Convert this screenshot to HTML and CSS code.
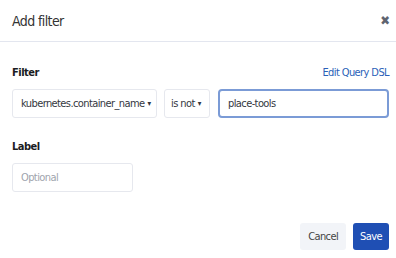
FILE: index.html
```html
<!DOCTYPE html>
<html lang="en">
<head>
    <meta charset="UTF-8">
    <meta name="viewport" content="width=device-width, initial-scale=1.0">
    <title>Add filter</title>
    <link rel="stylesheet" href="styles.css">
</head>
<body>
    <div class="modal">
        <div class="modal-header">
            <span class="modal-title">Add filter</span>
            <span class="close">&#x2716;</span>
        </div>
        <div class="modal-body">
            <div class="label-row">
                <span class="field-label">Filter</span>
                <a class="dsl-link" href="#">Edit Query DSL</a>
            </div>
            <div class="filter-row">
                <div class="select field-select">kubernetes.container_name<span class="caret">&#9662;</span></div>
                <div class="select op-select">is not<span class="caret">&#9662;</span></div>
                <div class="input value-input">place-tools</div>
            </div>
            <div class="label-row label-gap">
                <span class="field-label">Label</span>
            </div>
            <div class="input label-input placeholder">Optional</div>
        </div>
        <div class="modal-footer">
            <button class="btn btn-cancel">Cancel</button>
            <button class="btn btn-save">Save</button>
        </div>
    </div>
</body>
</html>
```

FILE: styles.css
```css
body {
    margin: 0;
    background-color: #fff;
    font-family: "Liberation Sans Narrow", "DejaVu Sans Condensed", "Open Sans", sans-serif;
    font-stretch: condensed;
    color: #343741;
}
.modal {
    width: 396px;
    height: 258px;
}
.modal-header {
    height: 42px;
    border-bottom: 1px solid #e3e6ef;
    display: flex;
    align-items: center;
    justify-content: space-between;
    padding: 0 6px 0 12px;
    box-sizing: border-box;
}
.modal-title {
    font-size: 14px;
    letter-spacing: -0.6px;
    color: #333;
}
.close {
    font-size: 13px;
    color: #5f6470;
}
.modal-body {
    padding: 23px 7px 0 12px;
}
.label-row {
    display: flex;
    justify-content: space-between;
    align-items: center;
    height: 14px;
}
.label-gap {
    margin-top: 21px;
}
.field-label {
    font-size: 11px;
    font-weight: bold;
    letter-spacing: -0.5px;
    color: #1a1c21;
}
.dsl-link {
    font-size: 11px;
    letter-spacing: -0.6px;
    color: #2a5fb8;
    text-decoration: none;
}
.filter-row {
    display: flex;
    gap: 7px;
    margin-top: 10px;
}
.select,
.input {
    height: 29px;
    box-sizing: border-box;
    border: 1px solid #e6e8ee;
    border-radius: 3px;
    display: flex;
    align-items: center;
    font-size: 11px;
    letter-spacing: -0.6px;
    white-space: nowrap;
    color: #343741;
    padding: 0 8px;
}
.field-select {
    width: 145px;
}
.op-select {
    width: 46px;
    padding: 0 6px;
}
.caret {
    font-size: 8px;
    margin-left: 3px;
    letter-spacing: 0;
}
.value-input {
    width: 171px;
    margin-left: 1px;
    border: 2px solid #7b9bd6;
    border-radius: 4px;
    padding: 0 8px;
}
.label-input {
    width: 121px;
    margin-top: 10px;
}
.placeholder {
    color: #a0a4ad;
}
.modal-footer {
    display: flex;
    justify-content: flex-end;
    gap: 7px;
    padding: 31px 7px 0 0;
}
.btn {
    height: 27px;
    border: none;
    border-radius: 3px;
    font-family: inherit;
    font-size: 11px;
    letter-spacing: -0.6px;
    padding: 0 8px;
}
.btn-cancel {
    background-color: #f2f4f8;
    color: #444;
}
.btn-save {
    background-color: #1f4fb4;
    color: #fff;
    padding: 0 7px;
}
```
